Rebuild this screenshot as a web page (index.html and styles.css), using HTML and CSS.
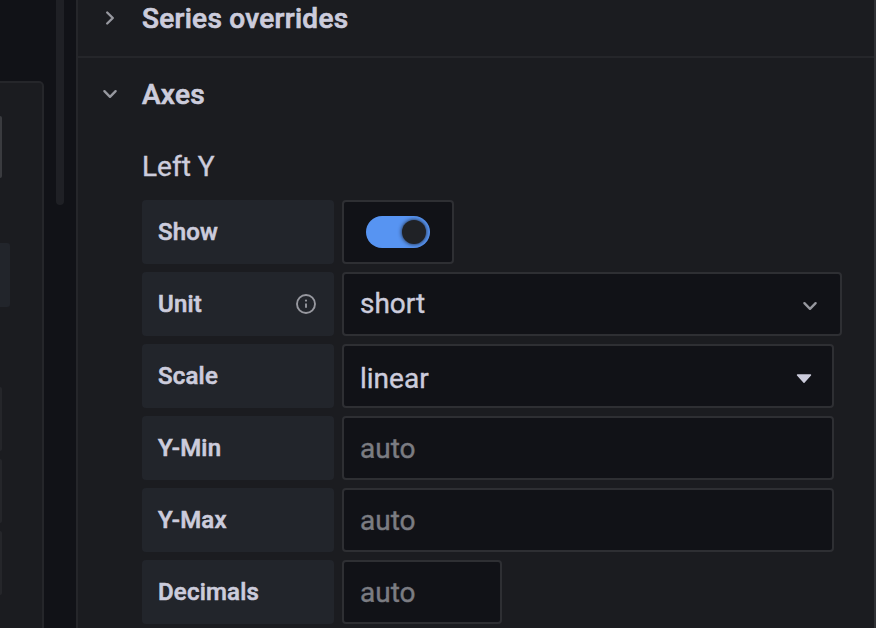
FILE: index.html
```html
<!DOCTYPE html>
<html lang="en">
<head>
<meta charset="utf-8">
<title>Panel options</title>
<link rel="stylesheet" href="styles.css">
</head>
<body>
<div class="app">
  <aside class="preview">
    <div class="preview-panel">
      <span class="stub stub-outline"></span>
      <span class="stub stub-fill"></span>
      <span class="stub stub-faint first"></span>
      <span class="stub stub-faint"></span>
      <span class="stub stub-faint"></span>
    </div>
    <div class="scrollbar"></div>
  </aside>
  <main class="options">
    <section class="group group-closed">
      <svg class="chevron" viewBox="0 0 20 20"><path d="M7.2 4.5 12.8 10 7.2 15.5"/></svg>
      <h2>Series overrides</h2>
    </section>
    <section class="group-open">
      <div class="group">
        <svg class="chevron" viewBox="0 0 20 20"><path d="M4.4 7.2 10 12.8 15.6 7.2"/></svg>
        <h2>Axes</h2>
      </div>
      <div class="fields">
        <h3>Left Y</h3>
        <div class="row">
          <label class="label">Show</label>
          <div class="box switch-box"><span class="switch"><span class="knob"></span></span></div>
        </div>
        <div class="row">
          <label class="label">Unit
            <svg class="info" viewBox="0 0 20 20"><circle cx="10" cy="10" r="9"/><path d="M10 9.4V13.8"/><circle class="dot" cx="10" cy="6.6" r="1.1"/></svg>
          </label>
          <div class="box unit"><span>short</span>
            <svg class="chevron" viewBox="0 0 20 20"><path d="M4.4 7.2 10 12.8 15.6 7.2"/></svg>
          </div>
        </div>
        <div class="row">
          <label class="label">Scale</label>
          <div class="box wide scale"><span>linear</span>
            <svg class="caret" viewBox="0 0 16 10"><path d="M1.5 1H14.5L8 8.2Z"/></svg>
          </div>
        </div>
        <div class="row">
          <label class="label">Y-Min</label>
          <div class="box wide placeholder"><span>auto</span></div>
        </div>
        <div class="row">
          <label class="label">Y-Max</label>
          <div class="box wide placeholder"><span>auto</span></div>
        </div>
        <div class="row">
          <label class="label">Decimals</label>
          <div class="box narrow placeholder"><span>auto</span></div>
        </div>
      </div>
    </section>
  </main>
</div>
</body>
</html>
```
FILE: styles.css
```css
* { box-sizing: border-box; }
body {
  margin: 0;
  background: #111217;
  color: #ccccdc;
  font-family: Roboto, sans-serif;
  overflow: hidden;
  -webkit-text-stroke: 0.4px currentColor;
}
h2, h3 { margin: 0; font-size: 28px; line-height: 36px; padding-top: 2px; }
h2 { font-weight: 500; letter-spacing: 0.28px; -webkit-text-stroke-width: 0.7px; }
h3 { font-weight: 400; padding-top: 1px; }
.app { display: flex; width: 876px; height: 628px; }

.preview { display: flex; flex: 0 0 76px; gap: 12px; }
.preview-panel {
  width: 44px;
  height: 560px;
  margin-top: 81px;
  padding-top: 33px;
  background: #1b1c20;
  border: 2px solid #25262a;
  border-left: 0;
  border-radius: 0 5px 0 0;
  display: flex;
  flex-direction: column;
}
.stub { flex: none; display: block; width: 2px; height: 64px; border-radius: 0 3px 3px 0; }
.stub-outline { height: 62px; background: #3a3b3f; }
.stub-fill { width: 10px; margin-top: 65px; background: #22252b; }
.stub-faint { background: #25262a; margin-top: 8px; }
.stub-faint.first { margin-top: 80px; }
.scrollbar { width: 8px; height: 205px; background: #1f2025; border-radius: 0 0 4px 4px; }

.options {
  flex: 1;
  background: #1b1c20;
  border-left: 2px solid #25262a;
  border-right: 2px solid #303135;
}
.group { display: flex; align-items: center; gap: 22px; padding-left: 22px; }
.group-closed { height: 58px; padding-bottom: 20px; border-bottom: 2px solid #25262a; }
.group-open .group { height: 72px; }
.chevron { flex: none; width: 20px; height: 20px; fill: none; stroke: #97989f; stroke-width: 2.4; stroke-linecap: round; stroke-linejoin: round; }

.fields { padding: 18px 0 0 64px; display: flex; flex-direction: column; gap: 8px; }
h3 { height: 44px; }
.row { display: flex; gap: 8px; height: 64px; }
.label {
  display: flex;
  justify-content: space-between;
  align-items: center;
  width: 192px;
  padding: 0 18px 0 16px;
  background: #22252b;
  border-radius: 4px;
  font-size: 24px;
  font-weight: 500;
  letter-spacing: 0.2px;
  -webkit-text-stroke-width: 0.6px;
}
.info { width: 20px; height: 20px; fill: none; stroke: #97989f; stroke-width: 1.9; }
.info .dot { fill: #97989f; stroke: none; }
.box {
  display: flex;
  align-items: center;
  justify-content: space-between;
  padding: 0 16px;
  background: #111217;
  border: 2px solid #2e2f33;
  border-radius: 4px;
  font-size: 28px;
}
.switch-box { width: 112px; padding: 0 22px; }
.switch {
  display: flex;
  justify-content: flex-end;
  align-items: center;
  width: 64px;
  height: 32px;
  padding-right: 4px;
  border-radius: 16px;
  background: #5794f2;
  overflow: hidden;
}
.knob { width: 24px; height: 24px; border-radius: 50%; background: #202226; box-shadow: 0 0 4px #1b1c20; }
.unit { width: 500px; padding-right: 20px; }
.unit span { margin-top: -1px; }
.unit .chevron { margin-top: 3px; }
.wide { width: 492px; }
.scale { padding-right: 20px; }
.scale span { margin-top: 4px; }
.caret { width: 16px; height: 10px; margin-top: 6px; fill: #ccccdc; stroke: #ccccdc; stroke-width: 1.4; stroke-linejoin: round; }
.narrow { width: 160px; }
.placeholder { color: #7b7c82; }
```
